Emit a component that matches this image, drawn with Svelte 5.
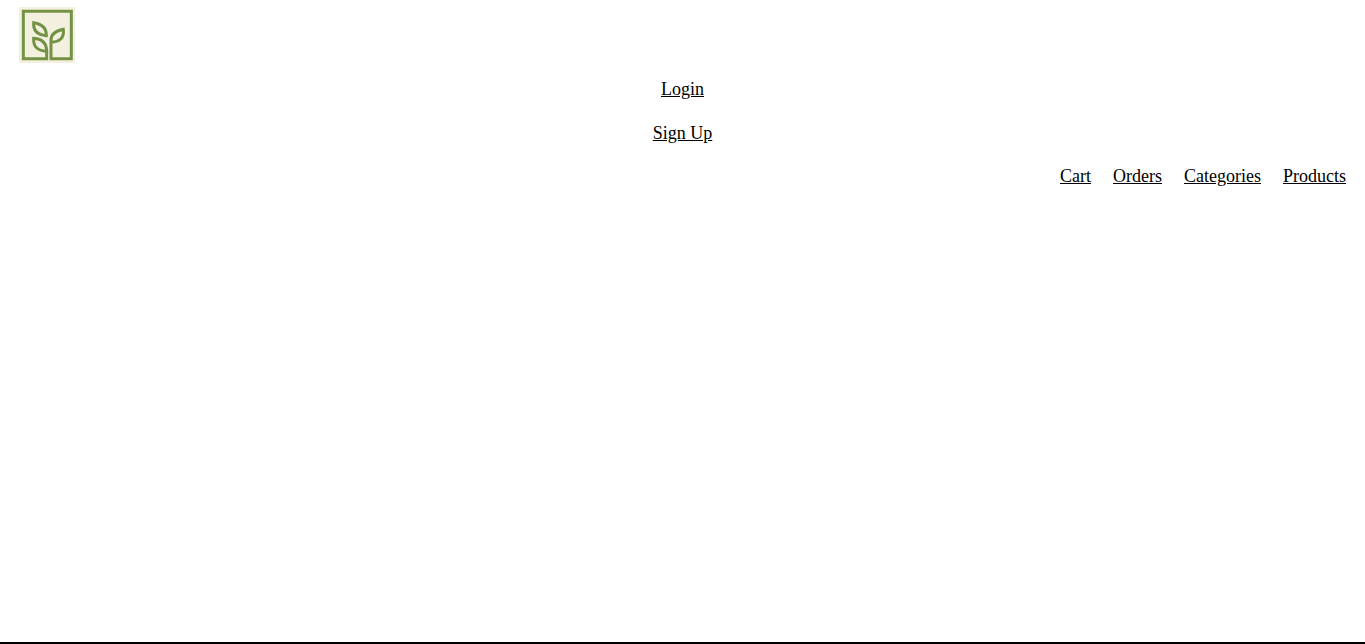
<script>
  const account = ['Login', 'Sign Up'];
  const sections = ['Cart', 'Orders', 'Categories', 'Products'];
</script>

<div class="page">
  <header>
    <a class="logo" href="#home" aria-label="Home">
      <svg viewBox="0 0 168 168" aria-hidden="true">
        <rect width="168" height="168" fill="#f4f0df" />
        <g fill="none" stroke="#739246" stroke-width="9" stroke-linejoin="miter">
          <path d="M83 130V155H13V13H157V155H96V99C96 83 109 72 133 67C136 92 123 105 96 106" />
          <path d="M44 47C68 51 83 62 82 86C57 84 42 74 44 47Z" />
          <path d="M44 94C67 96 83 108 83 133C56 131 42 119 44 94Z" />
        </g>
      </svg>
    </a>
    <nav class="account" aria-label="Account">
      {#each account as item}
        <a href="#{item.toLowerCase().replace(' ', '-')}">{item}</a>
      {/each}
    </nav>
    <nav class="sections" aria-label="Main">
      {#each sections as item}
        <a href="#{item.toLowerCase()}">{item}</a>
      {/each}
    </nav>
  </header>
</div>

<style>
  :global(body) {
    margin: 0;
    background: #fff;
  }
  .page {
    box-sizing: border-box;
    min-height: 100vh;
    border-bottom: 2px solid #000;
    font-family: "Liberation Serif", "Times New Roman", serif;
    font-size: 18px;
    line-height: 20px;
  }
  header {
    display: flex;
    flex-direction: column;
    padding: 7px 19px;
  }
  .logo {
    align-self: flex-start;
  }
  svg {
    display: block;
    width: 56px;
    height: 56px;
  }
  nav {
    display: flex;
  }
  nav a {
    color: #000;
    text-decoration: underline;
  }
  .account {
    flex-direction: column;
    align-items: center;
    gap: 24px;
    padding: 16px 0 23px;
  }
  .sections {
    flex-wrap: wrap;
    justify-content: flex-end;
    gap: 22px;
  }
</style>
